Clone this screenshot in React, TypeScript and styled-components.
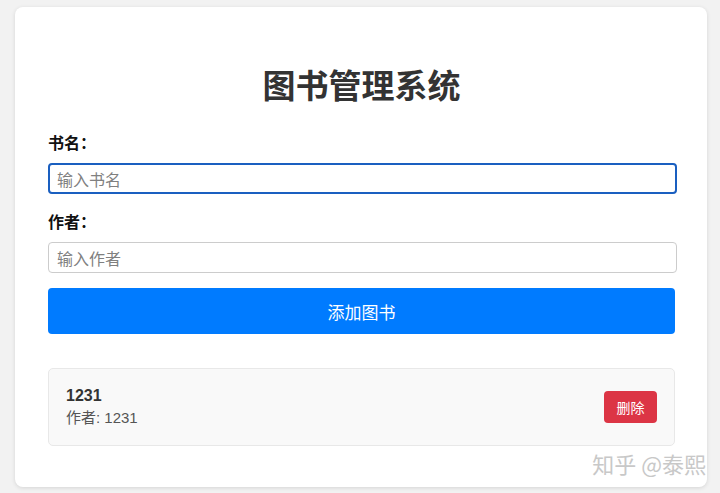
import React, { useState } from "react";
import styled, { createGlobalStyle } from "styled-components";

const GlobalStyle = createGlobalStyle`
  html, body {
    margin: 0;
    padding: 0;
    background-color: #f2f2f2;
    font-family: "Liberation Sans", Arial, "Noto Sans CJK SC", sans-serif;
  }
`;

type Book = { id: number; title: string; author: string };

const App = () => {
  const [title, setTitle] = useState("");
  const [author, setAuthor] = useState("");
  const [books, setBooks] = useState<Book[]>([
    { id: 1, title: "1231", author: "1231" },
  ]);

  const addBook = () => {
    if (!title || !author) return;
    setBooks([...books, { id: Date.now(), title, author }]);
    setTitle("");
    setAuthor("");
  };

  const removeBook = (id: number) => {
    setBooks(books.filter((b) => b.id !== id));
  };

  return (
    <>
      <GlobalStyle />
      <Page>
        <Card>
          <Heading>图书管理系统</Heading>
          <Label>书名：</Label>
          <Input
            focused
            placeholder="输入书名"
            value={title}
            onChange={(e) => setTitle(e.target.value)}
          />
          <Label>作者：</Label>
          <Input
            placeholder="输入作者"
            value={author}
            onChange={(e) => setAuthor(e.target.value)}
          />
          <AddButton onClick={addBook}>添加图书</AddButton>
          <List>
            {books.map((book) => (
              <Item key={book.id}>
                <Info>
                  <BookTitle>{book.title}</BookTitle>
                  <BookAuthor>作者: {book.author}</BookAuthor>
                </Info>
                <DeleteButton onClick={() => removeBook(book.id)}>
                  删除
                </DeleteButton>
              </Item>
            ))}
          </List>
          <Watermark>知乎 @泰熙</Watermark>
        </Card>
      </Page>
    </>
  );
};

const Page = styled.div`
  padding: 7px 13px 7px 15px;
`;

const Card = styled.div`
  position: relative;
  background-color: #fff;
  border-radius: 8px;
  box-shadow: 0 1px 4px rgba(0, 0, 0, 0.12);
  padding: 33px 32px 41px 33px;
  display: flex;
  flex-direction: column;
`;

const Heading = styled.h1`
  margin: 24px 0 28px;
  text-align: center;
  color: #333;
  font-size: 33px;
  line-height: 40px;
  font-weight: bold;
  font-family: "Noto Sans CJK SC", sans-serif;
`;

const Label = styled.label`
  font-size: 16px;
  font-weight: bold;
  color: #111;
  line-height: 20px;
  margin-bottom: 11px;
  font-family: "Noto Sans CJK SC", sans-serif;
`;

const Input = styled.input<{ focused?: boolean }>`
  box-sizing: border-box;
  width: calc(100% + 2px);
  height: 31px;
  margin-bottom: 17px;
  padding: 0 8px;
  font-size: 16px;
  color: #333;
  border-radius: 4px;
  font-family: "Noto Sans CJK SC", sans-serif;
  border: ${(p) => (p.focused ? "2px solid #1a5fc0" : "1px solid #ccc")};
  padding-left: ${(p) => (p.focused ? "7px" : "8px")};
  outline: none;
  &::placeholder {
    color: #808080;
  }
`;

const AddButton = styled.button`
  margin-top: -2px;
  height: 46px;
  border: none;
  border-radius: 4px;
  background-color: #007bff;
  color: #fff;
  font-size: 17px;
  font-family: "Noto Sans CJK SC", sans-serif;
  cursor: pointer;
`;

const List = styled.div`
  margin-top: 34px;
  display: flex;
  flex-direction: column;
  gap: 10px;
`;

const Item = styled.div`
  display: flex;
  align-items: center;
  justify-content: space-between;
  background-color: #f9f9f9;
  border: 1px solid #e8e8e8;
  border-radius: 5px;
  padding: 16px 17px;
`;

const Info = styled.div`
  display: flex;
  flex-direction: column;
`;

const BookTitle = styled.div`
  font-size: 16px;
  font-weight: bold;
  color: #333;
  line-height: 22px;
`;

const BookAuthor = styled.div`
  font-size: 15px;
  color: #555;
  line-height: 22px;
  font-family: "Liberation Sans", "Noto Sans CJK SC", sans-serif;
`;

const DeleteButton = styled.button`
  width: 53px;
  height: 32px;
  border: none;
  border-radius: 4px;
  background-color: #dc3545;
  color: #fff;
  font-size: 14px;
  font-family: "Noto Sans CJK SC", sans-serif;
  cursor: pointer;
`;

const Watermark = styled.div`
  position: absolute;
  right: 1px;
  bottom: 8px;
  font-size: 22px;
  color: #c8c8c8;
  font-family: "Noto Sans CJK SC", sans-serif;
  text-shadow: 1px 1px 0 #fff;
`;

export default App;
